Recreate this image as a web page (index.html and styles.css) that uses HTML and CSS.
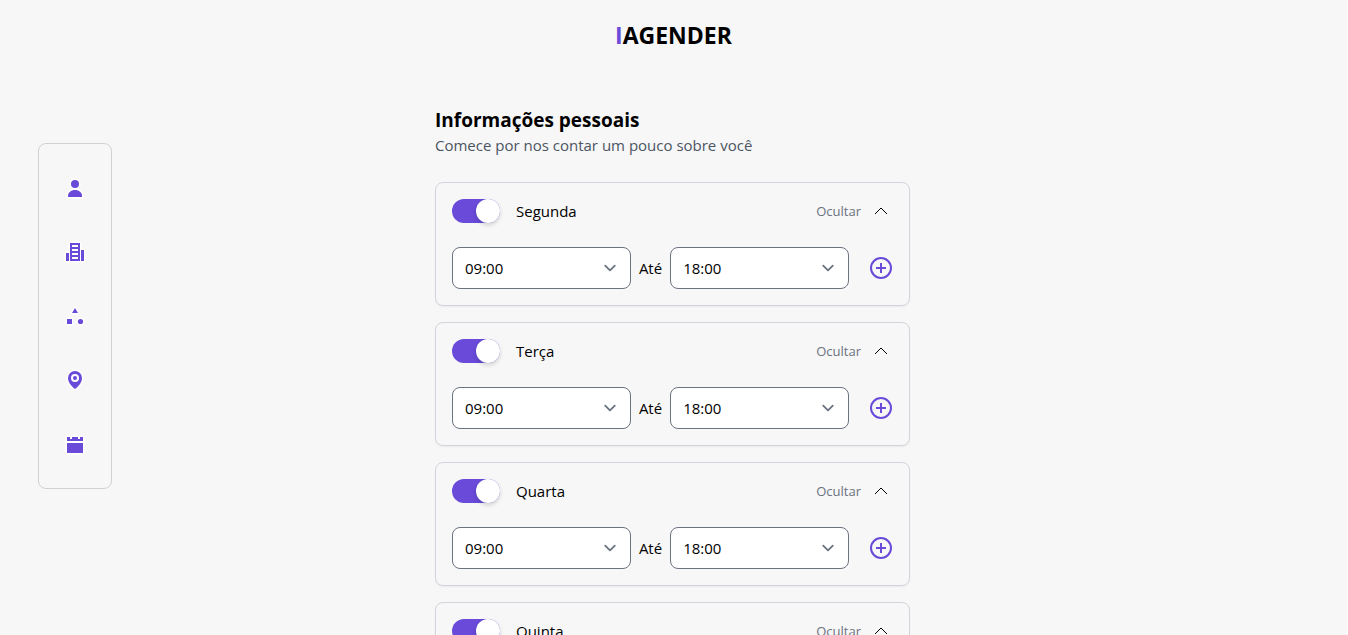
FILE: index.html
```html
<!DOCTYPE html>
<html lang="pt-BR">
<head>
<meta charset="utf-8">
<meta name="viewport" content="width=device-width, initial-scale=1">
<title>IAGENDER</title>
<link rel="stylesheet" href="styles.css">
</head>
<body>
<header class="header"><h1 class="logo"><span class="logo-accent">I</span>AGENDER</h1></header>
<div class="layout">
  <nav class="steps" aria-label="Etapas">
    <button class="step" type="button" aria-label="Pessoal"><svg viewBox="0 0 24 24"><circle cx="12" cy="8" r="4"/><path d="M5 21v-1c0-3.500 3-6 7-6s7 2.500 7 6v1z"/></svg></button>
    <button class="step" type="button" aria-label="Empresa"><svg viewBox="0 0 24 24"><path d="M7 3h10v18H7zM3 13h3v8H3zM18 10h3v11h-3z"/><path class="hole" d="M9 5h6v2H9zM9 9h6v2H9zM9 13h6v2H9zM9 17h6v2H9z"/></svg></button>
    <button class="step" type="button" aria-label="Serviços"><svg viewBox="0 0 24 24"><path d="M12 4l3 5H9zM4 15h5v5H4z"/><circle cx="17.500" cy="17.500" r="2.600"/></svg></button>
    <button class="step" type="button" aria-label="Endereço"><svg viewBox="0 0 24 24"><path d="M12 21c-2.500-2-7-6-7-11a7 7 0 0 1 14 0c0 5-4.500 9-7 11z"/><circle class="hole" cx="12" cy="10" r="4"/><circle class="dot" cx="12" cy="10" r="2"/></svg></button>
    <button class="step" type="button" aria-label="Horários"><svg viewBox="0 0 24 24"><path d="M4 5h16v16H4z"/><path class="hole" d="M3 9h18v2H3zM7 3h2v4H7zM15 3h2v4h-2z"/></svg></button>
  </nav>
  <main class="content">
    <h2 class="title">Informações pessoais</h2>
    <p class="subtitle">Comece por nos contar um pouco sobre você</p>
    <div class="days" id="days"></div>
  </main>
</div>
<template id="day-template">
  <section class="card">
    <div class="card-head">
      <label class="toggle"><input class="switch" type="checkbox" role="switch" checked><span class="day-name"></span></label>
      <button class="collapse" type="button">Ocultar<svg class="icon" viewBox="0 0 24 24"><path d="M6 15l6-6 6 6"/></svg></button>
    </div>
    <div class="hours">
      <select class="time" aria-label="Início"><option>09:00</option><option>10:00</option></select>
      <span class="until">Até</span>
      <select class="time" aria-label="Fim"><option>18:00</option><option>19:00</option></select>
      <button class="add" type="button" aria-label="Adicionar horário"><svg class="icon" viewBox="0 0 24 24"><circle cx="12" cy="12" r="10"/><path d="M12 7v10M7 12h10"/></svg></button>
    </div>
  </section>
</template>
<script src="script.js"></script>
</body>
</html>
```
FILE: styles.css
```css
* { box-sizing: border-box; }
body {
  margin: 0;
  min-height: 100vh;
  background: #f7f7f7;
  border-right: 1px solid #fcfcfc;
  color: #000;
  font: 16px/24px "Segoe UI", "Open Sans", sans-serif;
}
h1, h2, p { margin: 0; }
button { padding: 0; border: 0; background: none; font: inherit; cursor: pointer; }
svg { display: block; }
.header { padding: 19px 16px; text-align: center; }
.logo { font-size: 23px; line-height: 32px; font-weight: 700; }
.logo-accent { color: #694ad9; }
.layout {
  display: grid;
  grid-template-columns: 1fr minmax(0, 475px) 1fr;
  padding: 37px 2px 0 0;
}
.steps {
  position: sticky;
  top: 143px;
  align-self: start;
  justify-self: start;
  display: grid;
  gap: 40px;
  margin: 36px 0 0 38px;
  padding: 32px 24px;
  border: 1px solid #d1d1d3;
  border-radius: 8px;
}
.step { width: 24px; height: 24px; }
.step svg {
  width: 24px;
  height: 24px;
  overflow: visible;
  fill: #694ad9;
  stroke: #fff;
  stroke-width: 3;
  stroke-linejoin: round;
  paint-order: stroke;
}
.step .hole { fill: #fff; stroke: none; }
.step .dot { stroke: none; }
.content { grid-column: 2; padding-bottom: 32px; }
.title { font-size: 19px; line-height: 26px; font-weight: 700; }
.subtitle { font-size: 15px; line-height: 24px; color: #4b5563; }
.days { display: grid; gap: 16px; margin-top: 25px; }
.card {
  display: grid;
  gap: 24px;
  padding: 16px;
  border: 1px solid #d1d5db;
  border-radius: 8px;
  box-shadow: 0 1px 2px rgb(0 0 0 / 6%);
  font-size: 15px;
}
.card-head, .hours, .toggle, .collapse { display: flex; align-items: center; }
.card-head { justify-content: space-between; }
.toggle { gap: 16px; }
.switch {
  appearance: none;
  display: flex;
  width: 48px;
  height: 24px;
  margin: 0;
  border-radius: 12px;
  background: #d1d5db;
}
.switch::before {
  content: "";
  width: 24px;
  height: 24px;
  border-radius: 50%;
  background: #fff;
  box-shadow: 0 2px 4px rgb(0 0 0 / 16%);
}
.switch:checked { justify-content: flex-end; background: #694ad9; }
.collapse { gap: 8px; color: #6b7280; font-size: 13px; line-height: 24px; }
.icon { width: 24px; height: 24px; fill: none; stroke: #000; stroke-width: 1; }
.hours { gap: 8px; }
.time {
  appearance: none;
  flex: 1;
  min-width: 0;
  height: 42px;
  padding: 8px 40px 8px 12px;
  border: 1px solid #6b7280;
  border-radius: 8px;
  background: #fff url("data:image/svg+xml,%3Csvg xmlns='http://www.w3.org/2000/svg' fill='none' viewBox='0 0 20 20'%3E%3Cpath stroke='%236b7280' stroke-linecap='round' stroke-linejoin='round' stroke-width='1.5' d='M6 8l4 4 4-4'/%3E%3C/svg%3E") no-repeat right 8px center / 24px 24px;
  color: #000;
  font: inherit;
}
.add { padding-left: 12px; }
.add .icon { stroke: #694ad9; stroke-width: 2; }
```
FILE: script.js
```js
const template = document.getElementById("day-template");
const list = document.getElementById("days");
for (const day of ["Segunda", "Terça", "Quarta", "Quinta", "Sexta", "Sábado", "Domingo"]) {
  const card = template.content.cloneNode(true);
  card.querySelector(".day-name").textContent = day;
  list.append(card);
}
```
